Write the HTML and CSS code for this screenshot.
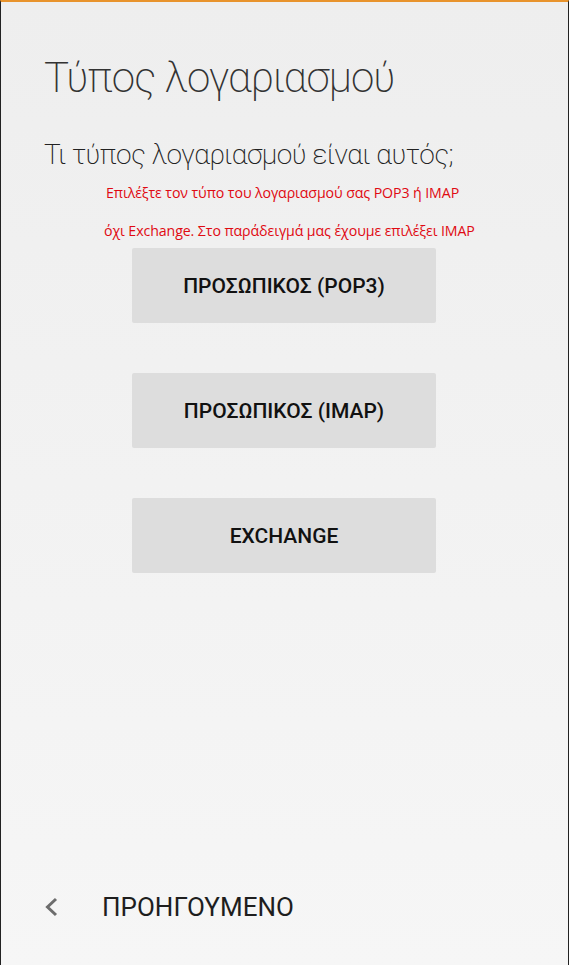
FILE: index.html
```html
<!DOCTYPE html>
<html lang="el">
<head>
<meta charset="utf-8">
<link rel="stylesheet" href="styles.css">
</head>
<body>
<div class="screen">
  <main class="content">
    <h1 class="title">Τύπος λογαριασμού</h1>
    <h2 class="subtitle">Τι τύπος λογαριασμού είναι αυτός;</h2>
    <div class="note">
      <p>Επιλέξτε τον τύπο του λογαριασμού σας POP3 ή IMAP</p>
      <p>όχι Exchange. Στο παράδειγμά μας έχουμε επιλέξει IMAP</p>
    </div>
    <div class="choices">
      <button class="choice">ΠΡΟΣΩΠΙΚΟΣ (POP3)</button>
      <button class="choice">ΠΡΟΣΩΠΙΚΟΣ (IMAP)</button>
      <button class="choice">EXCHANGE</button>
    </div>
  </main>
  <footer class="footer">
    <svg class="chev" width="16" height="22" viewBox="0 0 16 22"><path d="M13 3 L4.5 11 L13 19" fill="none" stroke="#6d6d6d" stroke-width="3"/></svg>
    <span class="back">ΠΡΟΗΓΟΥΜΕΝΟ</span>
  </footer>
</div>
</body>
</html>
```
FILE: styles.css
```css
html, body { margin: 0; padding: 0; }
body { font-family: Roboto, "Noto Sans", sans-serif; }
.screen {
  width: 569px; height: 965px; box-sizing: border-box;
  border-top: 2px solid #e8932c;
  border-left: 1px solid #222;
  border-right: 1px solid #222;
  background: linear-gradient(#eeeeee, #f6f6f6);
  display: flex; flex-direction: column;
}
.content { flex: 1; padding-left: 43px; }
.title {
  margin: 51px 0 0; font-weight: 200; font-size: 42px; color: #333;
  line-height: 50px; letter-spacing: -0.9px;
}
.subtitle {
  margin: 34px 0 0; font-weight: 200; font-size: 28px; color: #222;
  line-height: 36px; letter-spacing: -0.5px;
}
.note {
  color: #e00a12; font-family: "Open Sans", "Liberation Sans", sans-serif; font-size: 14.2px;
  font-weight: 500;
  margin-left: 62px; margin-top: 1px; width: 420px; letter-spacing: -0.1px;
}
.note p { margin: 0; line-height: 38px; }
.note p:last-child { margin-left: -2px; }
.choices {
  display: flex; flex-direction: column; gap: 50px;
  margin-left: 88px; margin-top: -2px;
}
.choice {
  width: 304px; height: 75px; border: none; border-radius: 2px;
  background: #dddddd; color: #111;
  font-family: Roboto, sans-serif; font-weight: 500; font-size: 21px;
  padding: 0;
}
.footer {
  height: 80px; display: flex; align-items: center; padding-left: 42px; padding-bottom: 18px;
}
.chev { display: block; }
.back { margin-left: 43px; font-size: 26px; color: #1e1e1e; font-weight: 400; }
```
